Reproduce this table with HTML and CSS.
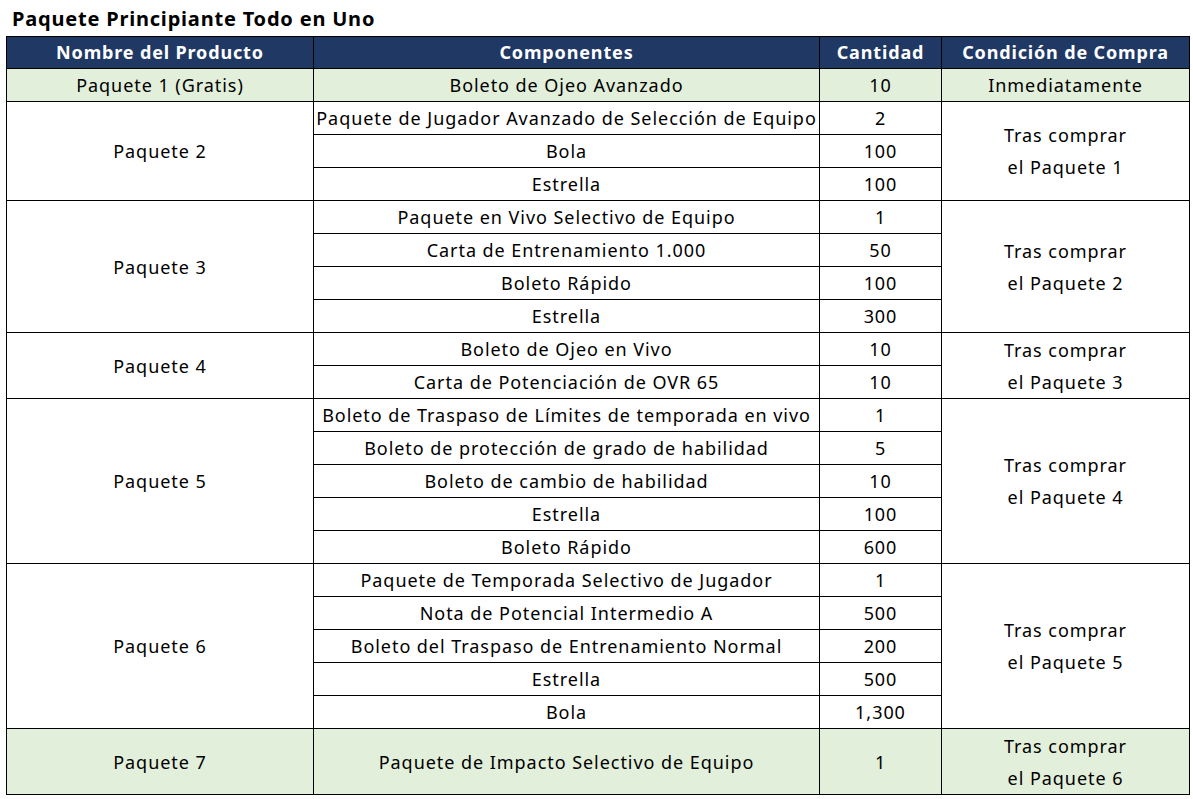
FILE: index.html
```html
<!DOCTYPE html>
<html lang="es">
<head>
<meta charset="utf-8">
<title>Paquete Principiante Todo en Uno</title>
<link rel="stylesheet" href="styles.css">
</head>
<body>
<h1 class="title">Paquete Principiante Todo en Uno</h1>
<table class="pack">
  <colgroup>
    <col class="c-name"><col class="c-comp"><col class="c-qty"><col class="c-cond">
  </colgroup>
  <thead>
    <tr><th>Nombre del Producto</th><th>Componentes</th><th>Cantidad</th><th>Condición de Compra</th></tr>
  </thead>
  <tbody>
    <tr class="green"><td>Paquete 1 (Gratis)</td><td>Boleto de Ojeo Avanzado</td><td>10</td><td>Inmediatamente</td></tr>

    <tr><td rowspan="3">Paquete 2</td><td>Paquete de Jugador Avanzado de Selección de Equipo</td><td>2</td><td rowspan="3" class="cond">Tras comprar<br>el Paquete 1</td></tr>
    <tr><td>Bola</td><td>100</td></tr>
    <tr><td>Estrella</td><td>100</td></tr>

    <tr><td rowspan="4">Paquete 3</td><td>Paquete en Vivo Selectivo de Equipo</td><td>1</td><td rowspan="4" class="cond">Tras comprar<br>el Paquete 2</td></tr>
    <tr><td>Carta de Entrenamiento 1.000</td><td>50</td></tr>
    <tr><td>Boleto Rápido</td><td>100</td></tr>
    <tr><td>Estrella</td><td>300</td></tr>

    <tr><td rowspan="2">Paquete 4</td><td>Boleto de Ojeo en Vivo</td><td>10</td><td rowspan="2" class="cond">Tras comprar<br>el Paquete 3</td></tr>
    <tr><td>Carta de Potenciación de OVR 65</td><td>10</td></tr>

    <tr><td rowspan="5">Paquete 5</td><td>Boleto de Traspaso de Límites de temporada en vivo</td><td>1</td><td rowspan="5" class="cond">Tras comprar<br>el Paquete 4</td></tr>
    <tr><td>Boleto de protección de grado de habilidad</td><td>5</td></tr>
    <tr><td>Boleto de cambio de habilidad</td><td>10</td></tr>
    <tr><td>Estrella</td><td>100</td></tr>
    <tr><td>Boleto Rápido</td><td>600</td></tr>

    <tr><td rowspan="5">Paquete 6</td><td>Paquete de Temporada Selectivo de Jugador</td><td>1</td><td rowspan="5" class="cond">Tras comprar<br>el Paquete 5</td></tr>
    <tr><td>Nota de Potencial Intermedio A</td><td>500</td></tr>
    <tr><td>Boleto del Traspaso de Entrenamiento Normal</td><td>200</td></tr>
    <tr><td>Estrella</td><td>500</td></tr>
    <tr><td>Bola</td><td>1,300</td></tr>

    <tr class="green tall"><td>Paquete 7</td><td>Paquete de Impacto Selectivo de Equipo</td><td>1</td><td class="cond">Tras comprar<br>el Paquete 6</td></tr>
  </tbody>
</table>
</body>
</html>
```
FILE: styles.css
```css
html, body {
  margin: 0;
  padding: 0;
  background: #ffffff;
}
body {
  font-family: "Noto Sans", "Noto Sans CJK KR", sans-serif;
  color: #000000;
  padding: 4px 0 0 6px;
}
.title {
  margin: 0 0 2px 6px;
  font-size: 20px;
  font-weight: 700;
  letter-spacing: 0.8px;
  line-height: 30px;
  height: 30px;
}
.pack {
  border-collapse: collapse;
  table-layout: fixed;
  width: 1183px;
  font-size: 18px;
  letter-spacing: 0.95px;
}
.c-name { width: 307px; }
.c-comp { width: 506px; }
.c-qty { width: 122px; }
.c-cond { width: 248px; }
.pack th, .pack td {
  border: 1px solid #000000;
  padding: 0;
  text-align: center;
  vertical-align: middle;
  height: 32px;
  line-height: 32px;
  white-space: nowrap;
  overflow: hidden;
}
.pack th {
  height: 31px;
  line-height: 31px;
  background: #1f3864;
  color: #ffffff;
  font-weight: 700;
  font-size: 18px;
  letter-spacing: 0.85px;
}
.pack tr.green td {
  background: #e2efda;
}
.pack tr.tall td {
  height: 65px;
}
```
